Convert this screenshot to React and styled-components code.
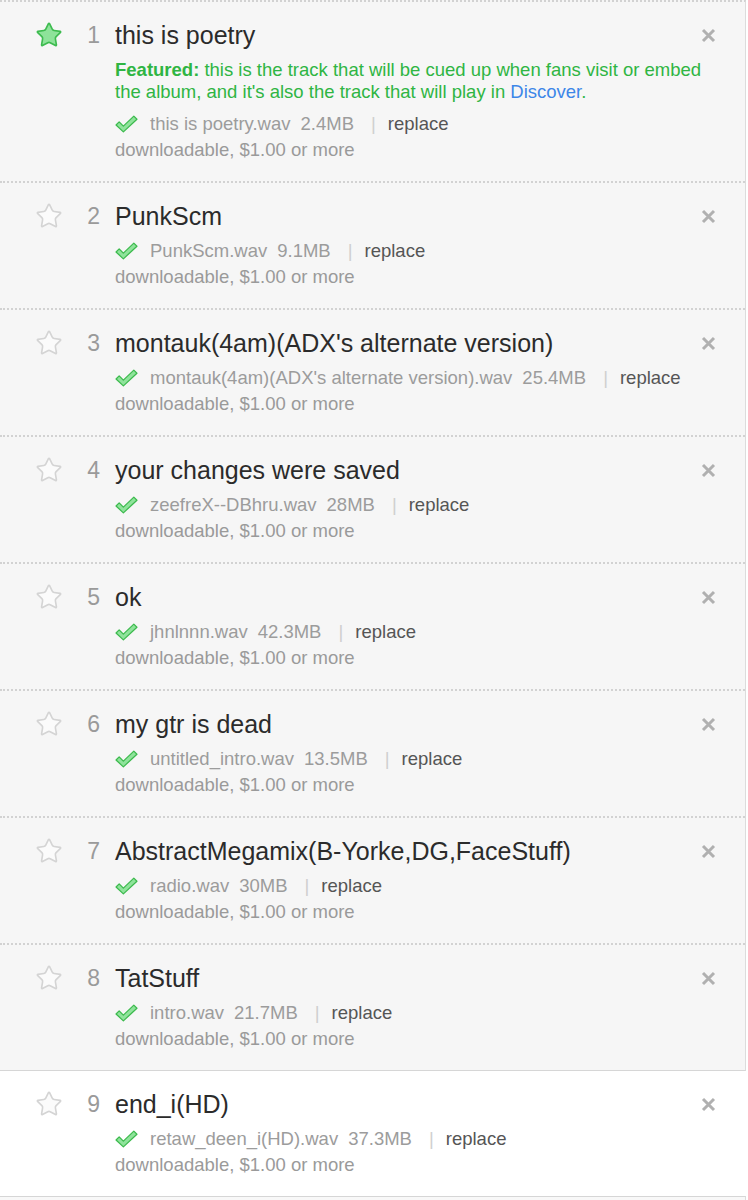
import React from 'react';
import styled, { createGlobalStyle } from 'styled-components';

const GlobalStyle = createGlobalStyle`
  html, body {
    margin: 0;
    padding: 0;
    background: #fff;
  }
  body {
    font-family: 'Liberation Sans', Arial, sans-serif;
  }
`;

const Page = styled.div`
  width: 748px;
  height: 1200px;
  overflow: hidden;
`;

const TrackList = styled.ul`
  list-style: none;
  margin: 0;
  padding: 0;
  width: 745px;
  background: #f6f6f6;
  border-right: 1px solid #dcdcdc;
  border-top: 2px dotted #d2d2d2;
  border-bottom: 1px solid #d6d6d6;
`;

const TrackRow = styled.li`
  display: flex;
  align-items: flex-start;
  padding: 17px 29px 18px 35px;
  background: ${(p) => (p.$fresh ? '#fff' : 'transparent')};
  border-bottom: ${(p) => (p.$last ? 'none' : '2px dotted #d2d2d2')};
  width: 745px;
  box-sizing: border-box;
`;

const StarBox = styled.div`
  width: 28px;
  height: 32px;
  display: flex;
  align-items: center;
  justify-content: center;
  flex-shrink: 0;
`;

const Num = styled.div`
  width: 37px;
  text-align: right;
  font-size: 23px;
  line-height: 32px;
  color: #9a9a9a;
  flex-shrink: 0;
`;

const Body = styled.div`
  flex: 1;
  margin-left: 15px;
`;

const Head = styled.div`
  display: flex;
  justify-content: space-between;
  align-items: flex-start;
`;

const Title = styled.div`
  font-size: 25px;
  line-height: 32px;
  color: #2b2b2b;
`;

const Featured = styled.div`
  margin-top: 8px;
  font-size: 18.5px;
  line-height: 22px;
  color: #2fb543;
  b {
    font-weight: bold;
  }
`;

const Discover = styled.a`
  color: #3d86e8;
  text-decoration: none;
`;

const FileLine = styled.div`
  display: flex;
  align-items: center;
  margin-top: ${(p) => (p.$featured ? '8px' : '6px')};
  font-size: 18.5px;
  line-height: 26px;
  color: #9c9c9c;
`;

const FileName = styled.span`
  margin-left: 12px;
`;

const Size = styled.span`
  margin-left: 10px;
`;

const Sep = styled.span`
  margin: 0 12px 0 17px;
  color: #cfcfcf;
`;

const Replace = styled.a`
  color: #555;
  text-decoration: none;
`;

const Price = styled.div`
  font-size: 18.5px;
  line-height: 26px;
  color: #9a9a9a;
`;

const Close = styled.div`
  width: 16px;
  height: 32px;
  display: flex;
  align-items: center;
  justify-content: center;
  flex-shrink: 0;
`;

const NextBox = styled.div`
  width: 745px;
  height: 20px;
  background: #f8f8f8;
  border-top: 1px solid #d6d6d6;
  border-right: 1px solid #dcdcdc;
`;

const Star = ({ on }) => (
  <svg width="30" height="30" viewBox="0 0 24 24">
    <path
      d="M11.525 2.295a.53.53 0 0 1 .95 0l2.31 4.679a2.123 2.123 0 0 0 1.595 1.16l5.166.756a.53.53 0 0 1 .294.904l-3.736 3.638a2.123 2.123 0 0 0-.611 1.878l.882 5.14a.53.53 0 0 1-.771.56l-4.618-2.428a2.122 2.122 0 0 0-1.973 0L6.396 21.01a.53.53 0 0 1-.77-.56l.881-5.139a2.122 2.122 0 0 0-.611-1.879L2.16 9.795a.53.53 0 0 1 .294-.906l5.165-.755a2.122 2.122 0 0 0 1.597-1.16z"
      fill={on ? '#8ee39a' : '#fbfbfb'}
      stroke={on ? '#3dbb4f' : '#d4d4d4'}
      strokeWidth="1.4"
      strokeLinejoin="round"
    />
  </svg>
);

const Check = () => (
  <svg width="23" height="18" viewBox="0 0 22 17">
    <polygon
      points="1,9.5 4,6.5 8,10.5 18,1 21,4 8,16"
      fill="#8fe39b"
      stroke="#3cba4d"
      strokeWidth="1.2"
      strokeLinejoin="round"
    />
  </svg>
);

const X = () => (
  <svg width="15" height="15" viewBox="0 0 15 15">
    <path d="M2 2 L13 13 M13 2 L2 13" stroke="#b0b0b0" strokeWidth="3" />
  </svg>
);

const tracks = [
  { title: 'this is poetry', file: 'this is poetry.wav', size: '2.4MB', featured: true },
  { title: 'PunkScm', file: 'PunkScm.wav', size: '9.1MB' },
  { title: "montauk(4am)(ADX's alternate version)", file: "montauk(4am)(ADX's alternate version).wav", size: '25.4MB' },
  { title: 'your changes were saved', file: 'zeefreX--DBhru.wav', size: '28MB' },
  { title: 'ok', file: 'jhnlnnn.wav', size: '42.3MB' },
  { title: 'my gtr is dead', file: 'untitled_intro.wav', size: '13.5MB' },
  { title: 'AbstractMegamix(B-Yorke,DG,FaceStuff)', file: 'radio.wav', size: '30MB' },
  { title: 'TatStuff', file: 'intro.wav', size: '21.7MB' },
];

const lastTrack = { title: 'end_i(HD)', file: 'retaw_deen_i(HD).wav', size: '37.3MB' };

const Track = ({ track, n, last, fresh }) => (
  <TrackRow $last={last} $fresh={fresh}>
    <StarBox>
      <Star on={track.featured} />
    </StarBox>
    <Num>{n}</Num>
    <Body>
      <Head>
        <Title>{track.title}</Title>
        <Close>
          <X />
        </Close>
      </Head>
      {track.featured && (
        <Featured>
          <b>Featured:</b> this is the track that will be cued up when fans visit or embed the
          album, and it's also the track that will play in <Discover href="#">Discover</Discover>.
        </Featured>
      )}
      <FileLine $featured={track.featured}>
        <Check />
        <FileName>{track.file}</FileName>
        <Size>{track.size}</Size>
        <Sep>|</Sep>
        <Replace href="#">replace</Replace>
      </FileLine>
      <Price>downloadable, $1.00 or more</Price>
    </Body>
  </TrackRow>
);

export default function App() {
  return (
    <Page>
      <GlobalStyle />
      <TrackList>
        {tracks.map((t, i) => (
          <Track key={i} track={t} n={i + 1} last={i === tracks.length - 1} />
        ))}
      </TrackList>
      <Track track={lastTrack} n={9} last fresh />
      <NextBox />
    </Page>
  );
}
